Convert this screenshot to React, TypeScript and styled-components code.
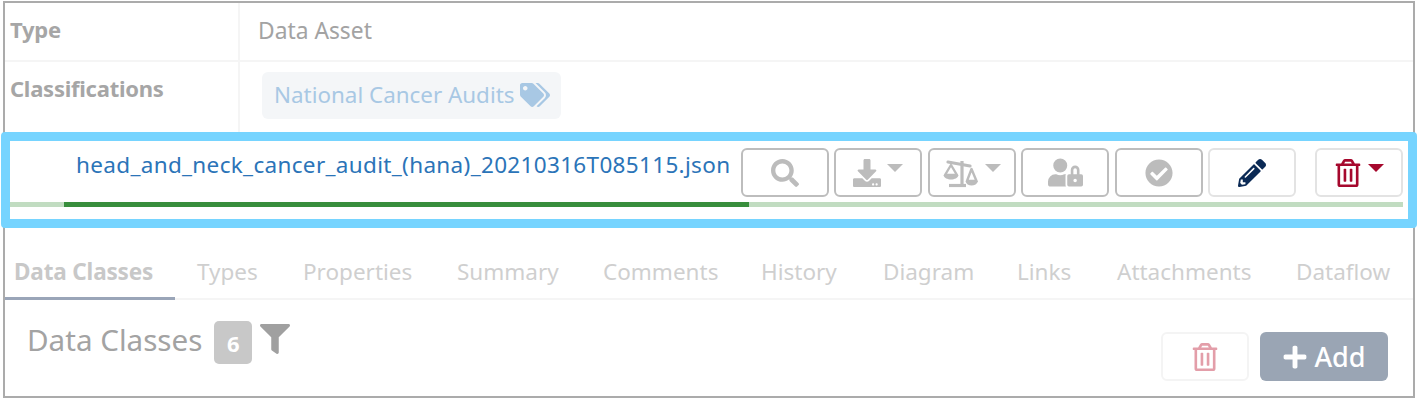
import React from "react";
import styled, { createGlobalStyle } from "styled-components";
import {
  FaSearch,
  FaDownload,
  FaUserLock,
  FaCheckCircle,
  FaPencilAlt,
  FaRegTrashAlt,
  FaFilter,
  FaPlus,
  FaTags,
} from "react-icons/fa";

const Global = createGlobalStyle`
  html, body { margin: 0; padding: 0; background: #fff; }
  body { font-family: "Noto Sans", "Open Sans", sans-serif; width: 1418px; height: 400px; overflow: hidden; }
  * { box-sizing: border-box; }
`;

const Frame = styled.div`
  margin: 1px 0 0 3px;
  width: 1412px;
  height: 397px;
  border: 2px solid #ababab;
  background: #fff;
  display: flex;
  flex-direction: column;
`;

const Row = styled.div<{ $h: number; $line?: boolean }>`
  display: grid;
  grid-template-columns: 235px 1fr;
  height: ${(p) => p.$h}px;
  flex: none;
  border-bottom: ${(p) => (p.$line ? "2px solid #f5f5f5" : "none")};
`;

const Label = styled.div`
  font-size: 22px;
  font-weight: 700;
  letter-spacing: -0.25px;
  color: #a6a6a6;
  padding: 13px 0 0 5px;
  line-height: 26px;
  border-right: 2px solid #f5f5f5;
`;

const Value = styled.div`
  font-size: 22.8px;
  color: #a3a3a3;
  line-height: 28px;
  padding: 14px 0 0 18px;
`;

const TagCell = styled.div`
  padding: 10px 0 0 22px;
`;

const Tag = styled.span`
  display: inline-flex;
  align-items: center;
  gap: 6px;
  height: 47px;
  padding: 0 11px 2px 12px;
  background: #f4f6f8;
  border-radius: 6px;
  color: #a8c8e4;
  font-size: 22.4px;
`;

const Highlight = styled.div`
  margin: 0 -4px;
  height: 96px;
  flex: none;
  border: 9px solid #76d4ff;
  border-radius: 4px;
  display: flex;
  flex-direction: column;
  background: #fff;
  position: relative;
  z-index: 1;
`;

const Top = styled.div`
  display: flex;
  align-items: flex-start;
  height: 61px;
  padding: 7px 5px 0 66px;
`;

const FileName = styled.a`
  color: #2b74b8;
  font-size: 22.5px;
  line-height: 34px;
  width: 665px;
  flex: none;
  letter-spacing: 0.33px;
  white-space: nowrap;
`;

const Buttons = styled.div`
  display: flex;
  gap: 5.4px;
`;

const ActionButton = styled.button<{ $muted?: boolean; $push?: number; $color?: string }>`
  width: 88px;
  height: 49px;
  border-radius: 6px;
  background: #fff;
  padding: 0;
  border: 2px solid ${(p) => (p.$muted ? "#bdbdbd" : "#e3e3e3")};
  margin-left: ${(p) => p.$push ?? 0}px;
  display: flex;
  align-items: center;
  justify-content: center;
  gap: 6px;
  color: ${(p) => p.$color ?? "#bcbcbc"};
  font-size: 28px;
`;

const Caret = styled.span<{ $color?: string }>`
  display: block;
  width: 0;
  height: 0;
  border-left: 8px solid transparent;
  border-right: 8px solid transparent;
  border-top: 8px solid ${(p) => p.$color ?? "#bcbcbc"};
  margin-top: -9px;
`;

const UserLock = styled(FaUserLock)`
  font-size: 35px;
`;

const Bar = styled.div`
  height: 5px;
  margin-right: 5px;
  background: #c1dcc1;
  display: flex;
`;

const BarFill = styled.div`
  background: #388e3c;
  height: 100%;
  margin-left: 54px;
  width: 685px;
`;

const Tabs = styled.div`
  display: flex;
  height: 72px;
  flex: none;
  align-items: flex-end;
  border-bottom: 2px solid #f5f5f5;
`;

const Tab = styled.div<{ $active?: boolean; $w: number }>`
  height: 44px;
  width: ${(p) => p.$w}px;
  flex: none;
  margin-bottom: -2px;
  padding: 1px 0 0 ${(p) => (p.$active ? 9 : 22)}px;
  font-size: 22.5px;
  line-height: 30px;
  white-space: nowrap;
  font-weight: ${(p) => (p.$active ? 700 : 400)};
  letter-spacing: ${(p) => (p.$active ? "-0.15px" : "0")};
  color: ${(p) => (p.$active ? "#c8c8c8" : "#cfcfcf")};
  border-bottom: 3px solid ${(p) => (p.$active ? "#9aa5b8" : "transparent")};
`;

const Section = styled.div`
  display: flex;
  justify-content: space-between;
  padding: 0 25px 0 22px;
  flex: 1;
`;

const Heading = styled.div`
  display: flex;
  align-items: flex-start;
  padding-top: 21px;
  gap: 8px;
`;

const Title = styled.span`
  font-size: 29.6px;
  line-height: 36px;
  color: #a3a3a3;
  margin: 1px 4px 0 0;
`;

const Badge = styled.span`
  width: 38px;
  height: 43px;
  background: #c8c8c8;
  border-radius: 5px;
  color: #fff;
  font-weight: 700;
  font-size: 22px;
  display: flex;
  align-items: center;
  justify-content: center;
`;

const FunnelIcon = styled(FaFilter)`
  color: #a0a0a0;
  font-size: 30px;
  margin-top: 3px;
`;

const Actions = styled.div`
  display: flex;
  gap: 11px;
  padding-top: 32px;
`;

const GhostButton = styled.button`
  width: 88px;
  height: 49px;
  border: 2px solid #f4f4f4;
  border-radius: 6px;
  background: #fff;
  color: #e39ea9;
  font-size: 28px;
  padding: 0;
  display: flex;
  align-items: center;
  justify-content: center;
`;

const AddButton = styled.button`
  width: 128px;
  height: 49px;
  border: none;
  border-radius: 6px;
  background: #9aa5b4;
  color: #fff;
  font-family: inherit;
  font-size: 27px;
  font-weight: 500;
  padding: 0;
  display: flex;
  align-items: center;
  justify-content: center;
  gap: 6px;
`;

const Scale = () => (
  <svg width="36" height="30" viewBox="0 0 36 30" fill="none" stroke="#bcbcbc" strokeWidth="2.4" strokeLinejoin="round">
    <path d="M5 4 L27 8" strokeWidth="3.2" strokeLinecap="round" />
    <path d="M19 3 V27" strokeWidth="3.2" />
    <path d="M6 27.5 H23" strokeWidth="3.2" />
    <path d="M8 7 L2 17 H14 Z" />
    <path d="M0.5 17 C1.5 23 14.5 23 15.5 17 Z" fill="#bcbcbc" stroke="none" />
    <path d="M28.5 11 L24 23 H33.5 Z" />
    <path d="M22.5 23 C23.5 29 33.5 29 35 23 Z" fill="#bcbcbc" stroke="none" />
  </svg>
);

const tabs = [
  ["Data Classes", 170],
  ["Types", 106],
  ["Properties", 154],
  ["Summary", 146],
  ["Comments", 158],
  ["History", 122],
  ["Diagram", 134],
  ["Links", 100],
  ["Attachments", 179],
  ["Dataflow", 118],
] as const;

export default function App() {
  return (
    <>
      <Global />
      <Frame>
        <Row $h={59} $line>
          <Label>Type</Label>
          <Value>Data Asset</Value>
        </Row>
        <Row $h={70}>
          <Label>Classifications</Label>
          <TagCell>
            <Tag>
              National Cancer Audits
              <FaTags size={30} color="#a8c8e4" />
            </Tag>
          </TagCell>
        </Row>
        <Highlight>
          <Top>
            <FileName>head_and_neck_cancer_audit_(hana)_20210316T085115.json</FileName>
            <Buttons>
              <ActionButton $muted>
                <FaSearch />
              </ActionButton>
              <ActionButton $muted>
                <FaDownload />
                <Caret />
              </ActionButton>
              <ActionButton $muted>
                <Scale />
                <Caret />
              </ActionButton>
              <ActionButton $muted>
                <UserLock />
              </ActionButton>
              <ActionButton $muted>
                <FaCheckCircle />
              </ActionButton>
              <ActionButton $color="#0b2a55">
                <FaPencilAlt />
              </ActionButton>
              <ActionButton $push={14} $color="#a6082d">
                <FaRegTrashAlt />
                <Caret $color="#a6082d" />
              </ActionButton>
            </Buttons>
          </Top>
          <Bar>
            <BarFill />
          </Bar>
        </Highlight>
        <Tabs>
          {tabs.map(([t, w], i) => (
            <Tab key={t} $active={i === 0} $w={w}>
              {t}
            </Tab>
          ))}
        </Tabs>
        <Section>
          <Heading>
            <Title>Data Classes</Title>
            <Badge>6</Badge>
            <FunnelIcon />
          </Heading>
          <Actions>
            <GhostButton>
              <FaRegTrashAlt />
            </GhostButton>
            <AddButton>
              <FaPlus size={26} />
              Add
            </AddButton>
          </Actions>
        </Section>
      </Frame>
    </>
  );
}
